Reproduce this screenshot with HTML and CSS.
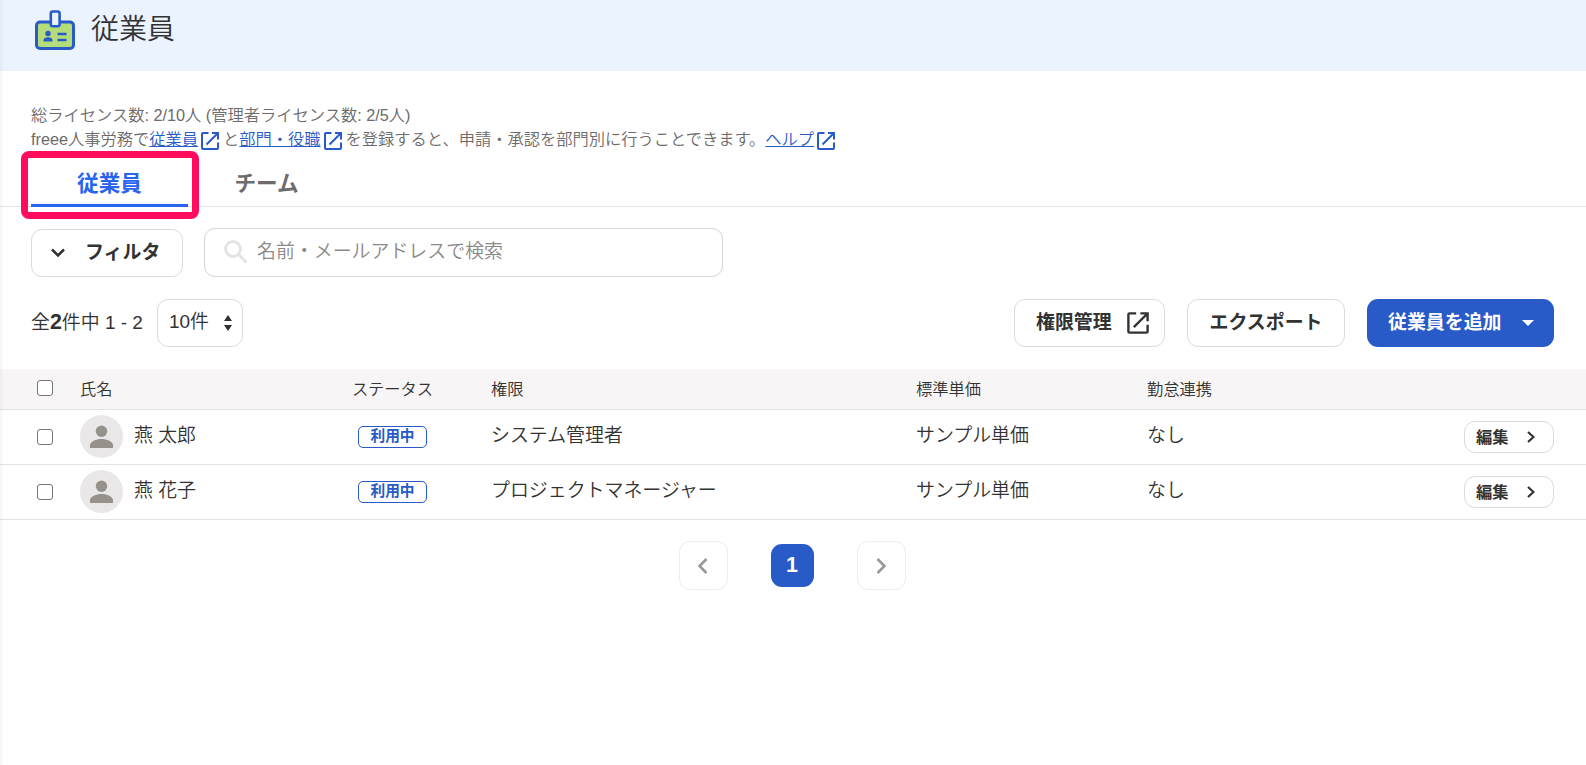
FILE: index.html
```html
<!DOCTYPE html>
<html lang="ja">
<head>
  <meta charset="UTF-8" />
  <meta name="viewport" content="width=device-width, initial-scale=1.0" />
  <title>従業員</title>
  <link rel="stylesheet" href="styles.css">
</head>
<body>
  <svg class="defs" width="0" height="0">
    <symbol id="icon-external" viewBox="0 0 20 20">
      <path d="M8.500 2H3a1 1 0 0 0-1 1v14a1 1 0 0 0 1 1h14a1 1 0 0 0 1-1v-5.500M12 2h6v6.500M17.500 2.500 6.500 13.500" />
    </symbol>
    <symbol id="icon-person" viewBox="0 0 43 43">
      <circle cx="21.500" cy="16.300" r="5.700" />
      <path d="M10 33v-2.500C10 26.500 16 24 21.500 24S33 26.500 33 30.500V33z" />
    </symbol>
  </svg>

  <header class="page-header">
    <svg class="page-icon" width="40" height="41" viewBox="0 0 40 41">
      <rect x="1.500" y="12" width="37" height="26.500" rx="3.500" fill="#b5dc7b" stroke="#285ac8" stroke-width="3" />
      <rect x="15.800" y="1.500" width="8.800" height="14.800" rx="2" fill="#ebf3ff" stroke="#285ac8" stroke-width="2.600" />
      <circle cx="13" cy="23.500" r="2.700" fill="#285ac8" />
      <path d="M8.500 31.500v-1c0-2 2-3.200 4.500-3.200s4.500 1.200 4.500 3.200v1z" fill="#285ac8" />
      <path d="M22.500 24h9M22.500 30h9" stroke="#285ac8" stroke-width="2.400" />
    </svg>
    <h1>従業員</h1>
  </header>

  <section class="notes">
    <p>総ライセンス数: 2/10人 (管理者ライセンス数: 2/5人)</p>
    <p class="note-line">freee人事労務で<a href="#">従業員</a><svg class="link-icon"><use href="#icon-external" /></svg>と<a href="#">部門・役職</a><svg class="link-icon"><use href="#icon-external" /></svg>を登録すると、申請・承認を部門別に行うことできます。<a href="#">ヘルプ</a><svg class="link-icon"><use href="#icon-external" /></svg></p>
  </section>

  <nav class="tabs">
    <a class="tab active" href="#">従業員<span class="tab-highlight"></span></a>
    <a class="tab" href="#">チーム</a>
  </nav>

  <div class="search-row">
    <button class="btn filter-btn">
      <svg width="14" height="10" viewBox="0 0 14 10"><path d="M1 1.500l6 6 6-6" /></svg>
      <span>フィルタ</span>
    </button>
    <div class="search-box">
      <svg width="24" height="24" viewBox="0 0 24 24"><circle cx="9" cy="9" r="7.500" /><path d="M14.500 14.500l8 8" /></svg>
      <span>名前・メールアドレスで検索</span>
    </div>
  </div>

  <div class="action-row">
    <div class="count">全<b>2</b>件中 1 - 2</div>
    <div class="per-page">
      <span>10件</span>
      <svg width="8" height="16" viewBox="0 0 8 16"><path d="M4 0l4 6H0zM4 16l4-6H0z" /></svg>
    </div>
    <div class="actions">
      <button class="btn permission-btn"><span>権限管理</span><svg class="btn-icon"><use href="#icon-external" /></svg></button>
      <button class="btn export-btn"><span>エクスポート</span></button>
      <button class="btn add-btn"><span>従業員を追加</span><svg width="12" height="6" viewBox="0 0 12 6"><path d="M0 0h12L6 6z" /></svg></button>
    </div>
  </div>

  <table class="employees">
    <thead>
      <tr>
        <th class="col-check"><span class="checkbox"></span></th>
        <th class="col-name">氏名</th>
        <th class="col-status">ステータス</th>
        <th class="col-role">権限</th>
        <th class="col-price">標準単価</th>
        <th class="col-link">勤怠連携</th>
        <th></th>
      </tr>
    </thead>
    <tbody>
      <tr>
        <td><span class="checkbox"></span></td>
        <td><div class="person"><svg class="avatar"><use href="#icon-person" /></svg><span class="txt">燕 太郎</span></div></td>
        <td class="col-status"><span class="badge">利用中</span></td>
        <td><span class="txt">システム管理者</span></td>
        <td><span class="txt">サンプル単価</span></td>
        <td><span class="txt">なし</span></td>
        <td class="col-edit"><button class="btn edit-btn"><span>編集</span><svg width="8" height="12" viewBox="0 0 8 12"><path d="M1 1l5.500 5L1 11" /></svg></button></td>
      </tr>
      <tr>
        <td><span class="checkbox"></span></td>
        <td><div class="person"><svg class="avatar"><use href="#icon-person" /></svg><span class="txt">燕 花子</span></div></td>
        <td class="col-status"><span class="badge">利用中</span></td>
        <td><span class="txt">プロジェクトマネージャー</span></td>
        <td><span class="txt">サンプル単価</span></td>
        <td><span class="txt">なし</span></td>
        <td class="col-edit"><button class="btn edit-btn"><span>編集</span><svg width="8" height="12" viewBox="0 0 8 12"><path d="M1 1l5.500 5L1 11" /></svg></button></td>
      </tr>
    </tbody>
  </table>

  <div class="pagination">
    <a class="page-arrow" href="#"><svg width="10" height="16" viewBox="0 0 10 16"><path d="M8.500 1L1.500 8l7 7" /></svg></a>
    <a class="page-current" href="#">1</a>
    <a class="page-arrow" href="#"><svg width="10" height="16" viewBox="0 0 10 16"><path d="M1.500 1l7 7-7 7" /></svg></a>
  </div>
</body>
</html>
```
FILE: styles.css
```css
* {
  margin: 0;
  padding: 0;
  box-sizing: border-box;
  font-family: "Liberation Sans", "Noto Sans CJK JP", sans-serif;
}

body {
  min-height: 100vh;
  background: #fff;
  color: #323232;
  font-size: 18.93px;
  font-weight: 350;
  overflow: hidden;
  position: relative;
}

/* soft edge left by the side menu */
body::after {
  content: "";
  position: absolute;
  left: 0;
  top: 0;
  width: 4px;
  height: 100%;
  background: linear-gradient(to right, rgba(0, 0, 0, 0.04), rgba(0, 0, 0, 0));
}

svg {
  display: block;
  flex: none;
  fill: none;
}

.defs {
  position: absolute;
}

.page-header {
  display: flex;
  height: 71px;
  padding: 10px 0 0 35px;
  background: #ebf3ff;
}

.page-header h1 {
  margin-left: 16px;
  font-size: 28px;
  line-height: 40px;
  font-weight: 350;
}

.notes {
  padding: 32px 31px 0;
  color: #6e6b6b;
  font-size: 16.25px;
  line-height: 24px;
}

.note-line {
  display: flex;
}

.notes a {
  color: #285ac8;
}

.link-icon {
  width: 20px;
  height: 20px;
  margin: 4px 3px 0 2px;
  stroke: #285ac8;
  stroke-width: 2;
}

.tabs {
  display: flex;
  height: 56px;
  padding-left: 31px;
  border-bottom: 1px solid #e4e2e2;
}

.tab {
  position: relative;
  width: 157px;
  height: 56px;
  border-bottom: 3px solid transparent;
  color: #6e6b6b;
  font-size: 21.6px;
  font-weight: bold;
  line-height: 65px;
  text-align: center;
  text-decoration: none;
}

.tab.active {
  border-bottom-color: #2864f0;
  color: #2864f0;
}

.tab-highlight {
  position: absolute;
  left: -10px;
  top: 0;
  width: 178px;
  height: 68px;
  border: 7px solid #ff0d5c;
  border-radius: 8px;
}

.btn {
  display: flex;
  align-items: center;
  height: 48px;
  border: 1px solid #dcdada;
  border-radius: 11px;
  background: #fff;
  color: #323232;
  font-size: 18.93px;
  font-weight: bold;
  white-space: nowrap;
}

.btn svg {
  stroke: #323232;
  stroke-width: 2.500;
}

.btn span {
  line-height: 24px;
  margin-bottom: 1px;
}

.search-row {
  display: flex;
  align-items: flex-end;
  gap: 21px;
  padding: 21px 31px 0;
}

.filter-btn {
  width: 152px;
  padding-left: 19px;
  gap: 20px;
}

.search-box {
  display: flex;
  align-items: center;
  width: 519px;
  height: 49px;
  padding-left: 19px;
  gap: 9px;
  border: 1px solid #d7d5d5;
  border-radius: 11px;
  color: #8c8989;
}

.search-box svg {
  margin-top: -2px;
  stroke: #e4e2e2;
  stroke-width: 2.800;
}

.search-box span {
  line-height: 24px;
  margin-bottom: 2px;
}

.action-row {
  display: flex;
  align-items: center;
  padding: 22px 32px 22px 31px;
}

.count {
  width: 126px;
  line-height: 24px;
  margin-bottom: 2px;
  white-space: nowrap;
}

.count b {
  font-size: 21.4px;
  font-weight: bold;
}

.per-page {
  display: flex;
  align-items: center;
  justify-content: space-between;
  width: 86px;
  height: 48px;
  padding: 0 10px 0 11px;
  border: 1px solid #dcdada;
  border-radius: 11px;
}

.per-page span {
  line-height: 24px;
  margin-bottom: 2px;
}

.per-page svg {
  fill: #323232;
}

.actions {
  display: flex;
  gap: 22px;
  margin-left: auto;
}

.permission-btn {
  width: 151px;
  padding-left: 21px;
  gap: 14px;
}

.btn .btn-icon {
  width: 24px;
  height: 24px;
  stroke-width: 2;
}

.export-btn {
  width: 158px;
  justify-content: center;
}

.add-btn {
  width: 187px;
  padding-left: 21px;
  gap: 20px;
  border: 0;
  background: #285ac8;
  color: #fff;
}

.add-btn svg {
  fill: #fff;
  stroke: none;
}

.employees {
  width: 100%;
  table-layout: fixed;
  border-collapse: separate;
  border-spacing: 0;
}

.employees th {
  height: 41px;
  background: #f7f5f5;
  border-bottom: 1px solid #e4e2e2;
  font-size: 16.25px;
  font-weight: 350;
  line-height: 24px;
  padding-bottom: 1px;
  text-align: left;
}

.employees td {
  height: 55px;
  border-bottom: 1px solid #e4e2e2;
  vertical-align: middle;
}

.employees .col-status {
  width: 197px;
  text-align: center;
}

.col-check {
  width: 80px;
}

.col-name {
  width: 214px;
}

.col-role {
  width: 425px;
}

.col-price {
  width: 231px;
}

.col-link {
  width: 231px;
}

.checkbox {
  display: block;
  width: 16px;
  height: 16px;
  margin: 0 0 1px 37px;
  border: 1.5px solid #767676;
  border-radius: 3px;
  background: #fff;
}

.person {
  display: flex;
  align-items: center;
  gap: 11px;
  margin-bottom: 1px;
}

.avatar {
  width: 43px;
  height: 43px;
  border-radius: 50%;
  background: #e9e7e7;
  fill: #96918b;
}

.txt {
  display: block;
  line-height: 24px;
  margin-bottom: 2px;
}

.badge {
  display: block;
  width: 69px;
  height: 22px;
  margin: 0 auto;
  border: 1px solid #285ac8;
  border-radius: 5px;
  color: #285ac8;
  font-size: 14.7px;
  font-weight: bold;
  line-height: 18px;
}

.edit-btn {
  width: 90px;
  height: 32px;
  margin: 0 32px 0 auto;
  padding-left: 11px;
  gap: 18px;
  font-size: 16.25px;
}

.edit-btn svg {
  stroke-width: 2.200;
}

.pagination {
  display: flex;
  align-items: center;
  justify-content: center;
  gap: 43px;
  padding: 21px 2px 0 0;
}

.page-arrow {
  display: flex;
  align-items: center;
  justify-content: center;
  width: 49px;
  height: 49px;
  border: 1px solid #eeecec;
  border-radius: 11px;
}

.page-arrow svg {
  stroke: #989898;
  stroke-width: 2.600;
}

.page-current {
  width: 43px;
  height: 43px;
  border-radius: 11px;
  background: #285ac8;
  color: #fff;
  font-size: 21.4px;
  font-weight: bold;
  line-height: 43px;
  text-align: center;
  text-decoration: none;
}
```
